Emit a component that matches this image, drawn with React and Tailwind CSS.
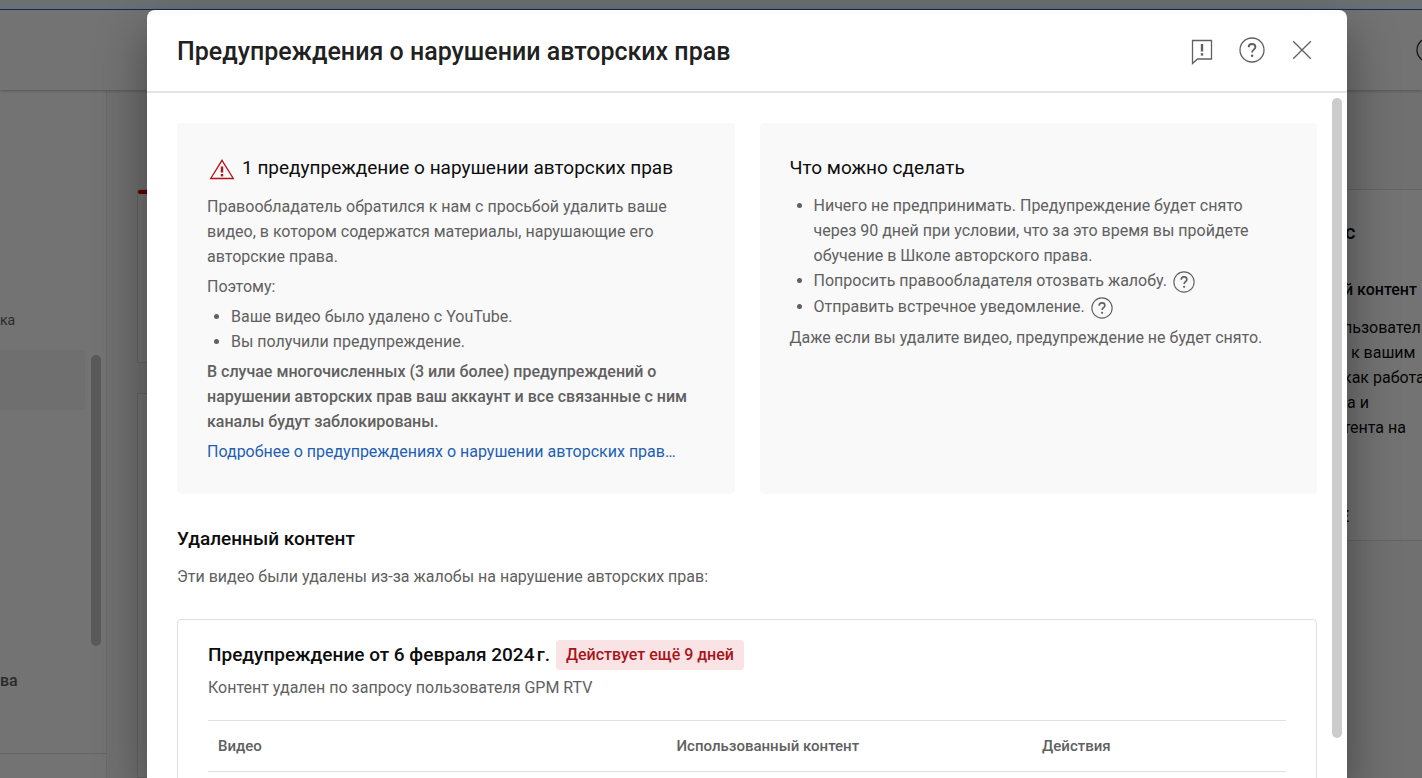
import React from 'react';

const consequences = ['Ваше видео было удалено с YouTube.', 'Вы получили предупреждение.'];

const options = [
    { text: 'Ничего не предпринимать. Предупреждение будет снято через 90 дней при условии, что за это время вы пройдете обучение в Школе авторского права.' },
    { text: 'Попросить правообладателя отозвать жалобу.', help: true },
    { text: 'Отправить встречное уведомление.', help: true },
];

const sideLines = ['льзовател', '\u00a0\u00a0к вашим', 'как работа', '\u00a0а и', 'тента на'];

function HelpIcon({ className }) {
    return (
        <svg viewBox="0 0 26 26" className={className} fill="none" stroke="currentColor" aria-hidden="true">
            <circle cx="13" cy="13" r="12" strokeWidth="1.3" />
            <path d="M9.7 10.200C9.7 8.100 11 7 13 7s3.400 1.100 3.400 3c0 2.500-3.300 2.800-3.300 5.400" strokeWidth="1.900" />
            <circle cx="13.100" cy="18.700" r="1.250" fill="currentColor" stroke="none" />
        </svg>
    );
}

function FeedbackIcon() {
    return (
        <svg viewBox="0 0 26 26" className="w-[26px] h-[26px] overflow-visible" fill="none" stroke="currentColor" aria-hidden="true">
            <path d="M3.500 3.500h19v18.500h-14l-5 4.500z" strokeWidth="1.300" />
            <path d="M13 7v7.500" strokeWidth="2.400" />
            <path d="M13 16.200v2.400" strokeWidth="2.400" />
        </svg>
    );
}

function CloseIcon() {
    return (
        <svg viewBox="0 0 26 26" className="w-[26px] h-[26px]" fill="none" stroke="currentColor" aria-hidden="true">
            <path d="M4.200 4.200l17.600 17.600M21.800 4.200L4.200 21.800" strokeWidth="1.300" />
        </svg>
    );
}

function WarningIcon() {
    return (
        <svg viewBox="0 0 30 30" className="w-[30px] h-[30px] shrink-0 text-[#b31217]" fill="none" stroke="currentColor" aria-hidden="true">
            <path d="M15 7.300L26.300 25.500H3.700z" strokeWidth="1.300" />
            <path d="M15 13.500v6" strokeWidth="2.400" />
            <path d="M15 21v2.400" strokeWidth="2.400" />
        </svg>
    );
}

// Studio page behind the dialog
function Page() {
    return (
        <div className="h-full flex flex-col overflow-hidden">
            <div className="h-[10px] shrink-0 bg-[#eefafe] border-b border-[#2a62c8]" />
            <header className="h-20 shrink-0 relative z-10 bg-white shadow-[0_1px_3px_rgba(0,0,0,0.25)] flex items-center justify-end">
                <span className="-mr-5 shrink-0 text-[#303030]"><HelpIcon className="w-[26px] h-[26px]" /></span>
            </header>
            <div className="flex-1 min-h-0 flex">
                <nav className="w-[107px] shrink-0 flex flex-col bg-white border-r border-[#e8e8e8] text-[#606060]">
                    <div className="flex-1 flex justify-between">
                        <div className="flex-1 pt-[217px]">
                            <div className="text-sm leading-[26px]">ка</div>
                            <div className="mt-[17px] h-[60px] mr-1.5 bg-[#f6f6f6] rounded-r-sm" />
                            <div className="mt-[258px] text-base leading-[26px] font-medium">ва</div>
                        </div>
                        <div className="w-[10px] h-[291px] mt-[265px] mr-[5px] rounded-full bg-[#c8c8c8]" />
                    </div>
                    <div className="h-[25px] border-t border-[#e0e0e0]" />
                </nav>
                <main className="flex-1 min-w-0 flex bg-[#f9f9f9] pt-[99px] pl-[30px]">
                    <div className="flex-1 flex flex-col gap-[30px]">
                        <section className="h-[174px] shrink-0 bg-white border border-[#e0e0e0]">
                            <div className="h-1 bg-[#c00] rounded-full" />
                        </section>
                        <section className="flex-1 bg-white border border-[#e0e0e0]" />
                    </div>
                    <aside className="w-[90px] h-[352px] pl-2 bg-white border-y border-[#e0e0e0] text-[#0d0d0d] text-base leading-[25px] whitespace-nowrap">
                        <h2 className="pt-[30px] text-xl leading-[25px] font-medium">&nbsp;с</h2>
                        <h3 className="mt-8 pl-1 font-medium">й контент</h3>
                        <div className="mt-[13px] pl-[3px]">
                            {sideLines.map(line => <p key={line}>{line}</p>)}
                        </div>
                        <div className="mt-16 font-medium">Е</div>
                    </aside>
                </main>
            </div>
        </div>
    );
}

function IconButton({ label, children }) {
    return (
        <button type="button" aria-label={label} className="w-[26px] h-[26px] text-[#606060] hover:text-black">
            {children}
        </button>
    );
}

function StrikeCard() {
    return (
        <section className="mt-[30px] px-[30px] pt-5 pb-[30px] border border-[#e0e0e0] rounded">
            <div className="flex items-center gap-1.5">
                <h3 className="text-[19px] leading-[30px] font-medium text-[#0d0d0d]">Предупреждение от 6 февраля 2024&#8239;г.</h3>
                <span className="px-[10px] rounded-sm bg-[#f9e3e4] leading-[30px] font-medium text-[#a8141a]">Действует ещё 9 дней</span>
            </div>
            <p className="mt-[5px]">Контент удален по запросу пользователя GPM RTV</p>
            <table className="mt-5 w-full table-fixed text-left text-[15px] leading-[50px]">
                <thead>
                    <tr className="border-y border-[#e0e0e0]">
                        <th className="w-[43%] pl-[10px] font-medium">Видео</th>
                        <th className="w-[34%] pl-[5px] font-medium">Использованный контент</th>
                        <th className="pl-1 font-medium">Действия</th>
                    </tr>
                </thead>
            </table>
        </section>
    );
}

function Dialog() {
    return (
        <div
            role="dialog"
            aria-labelledby="dialog-title"
            className="w-full max-w-[1200px] h-full flex flex-col bg-white rounded-t-lg shadow-[0_20px_50px_rgba(0,0,0,0.4)]"
        >
            <div className="shrink-0 flex items-center justify-between pl-[30px] pr-8 pb-0.5 h-[83px] border-b-2 border-[#e4e4e4]">
                <h1 id="dialog-title" className="pt-1 text-[25px] leading-8 font-medium text-[#212121]">Предупреждения о нарушении авторских прав</h1>
                <div className="flex gap-6">
                    <IconButton label="Отправить отзыв"><FeedbackIcon /></IconButton>
                    <IconButton label="Справка"><HelpIcon className="w-[26px] h-[26px]" /></IconButton>
                    <IconButton label="Закрыть"><CloseIcon /></IconButton>
                </div>
            </div>

            <div className="flex-1 min-h-0 flex">
                <div className="flex-1 min-w-0 overflow-hidden pl-[30px] pt-[30px] text-base leading-[25px] text-[#606060]">
                    <div className="grid grid-cols-2 gap-[25px]">
                        <section className="p-[30px] bg-[#f9f9f9] rounded flex flex-col gap-[5px]">
                            <h2 className="mb-[6px] flex items-center gap-[5px] text-[19px] leading-[30px] text-[#0d0d0d]">
                                <WarningIcon />
                                1 предупреждение о нарушении авторских прав
                            </h2>
                            <p>Правообладатель обратился к нам с просьбой удалить ваше видео, в котором содержатся материалы, нарушающие его авторские права.</p>
                            <p>Поэтому:</p>
                            <ul className="list-disc pl-6">
                                {consequences.map(item => <li key={item}>{item}</li>)}
                            </ul>
                            <p className="font-medium">В случае многочисленных (3 или более) предупреждений о нарушении авторских прав ваш аккаунт и все связанные с ним каналы будут заблокированы.</p>
                            <a href="#more" className="text-[#1f5fb5]">Подробнее о предупреждениях о нарушении авторских прав…</a>
                        </section>

                        <section className="p-[30px] bg-[#f9f9f9] rounded flex flex-col gap-[5px]">
                            <h2 className="mb-[5px] text-[19px] leading-[30px] text-[#0d0d0d]">Что можно сделать</h2>
                            <ul className="list-disc pl-6">
                                {options.map(option => (
                                    <li key={option.text} className={option.help ? 'h-[26px]' : ''}>
                                        {option.text}
                                        {option.help && (
                                            <button type="button" aria-label="Подробнее" className="ml-1.5 h-[22px] align-middle">
                                                <HelpIcon className="w-[22px] h-[22px]" />
                                            </button>
                                        )}
                                    </li>
                                ))}
                            </ul>
                            <p>Даже если вы удалите видео, предупреждение не будет снято.</p>
                        </section>
                    </div>

                    <h2 className="mt-[30px] text-[19px] leading-[30px] font-medium text-[#0d0d0d]">Удаленный контент</h2>
                    <p className="mt-[10px]">Эти видео были удалены из-за жалобы на нарушение авторских прав:</p>
                    <StrikeCard />
                </div>
                <div className="shrink-0 pl-[15px] pr-[5px] pt-[5px] pb-10">
                    <div className="w-[10px] h-full rounded-full bg-[#ccc]" />
                </div>
            </div>
        </div>
    );
}

export default function App() {
    return (
        <div className="relative h-screen overflow-hidden bg-white font-[Roboto,'Liberation_Sans',sans-serif]">
            <Page />
            <div className="absolute inset-0 z-20 bg-black/55 pt-[10px] pl-[147px] pr-[75px]">
                <Dialog />
            </div>
        </div>
    );
}
